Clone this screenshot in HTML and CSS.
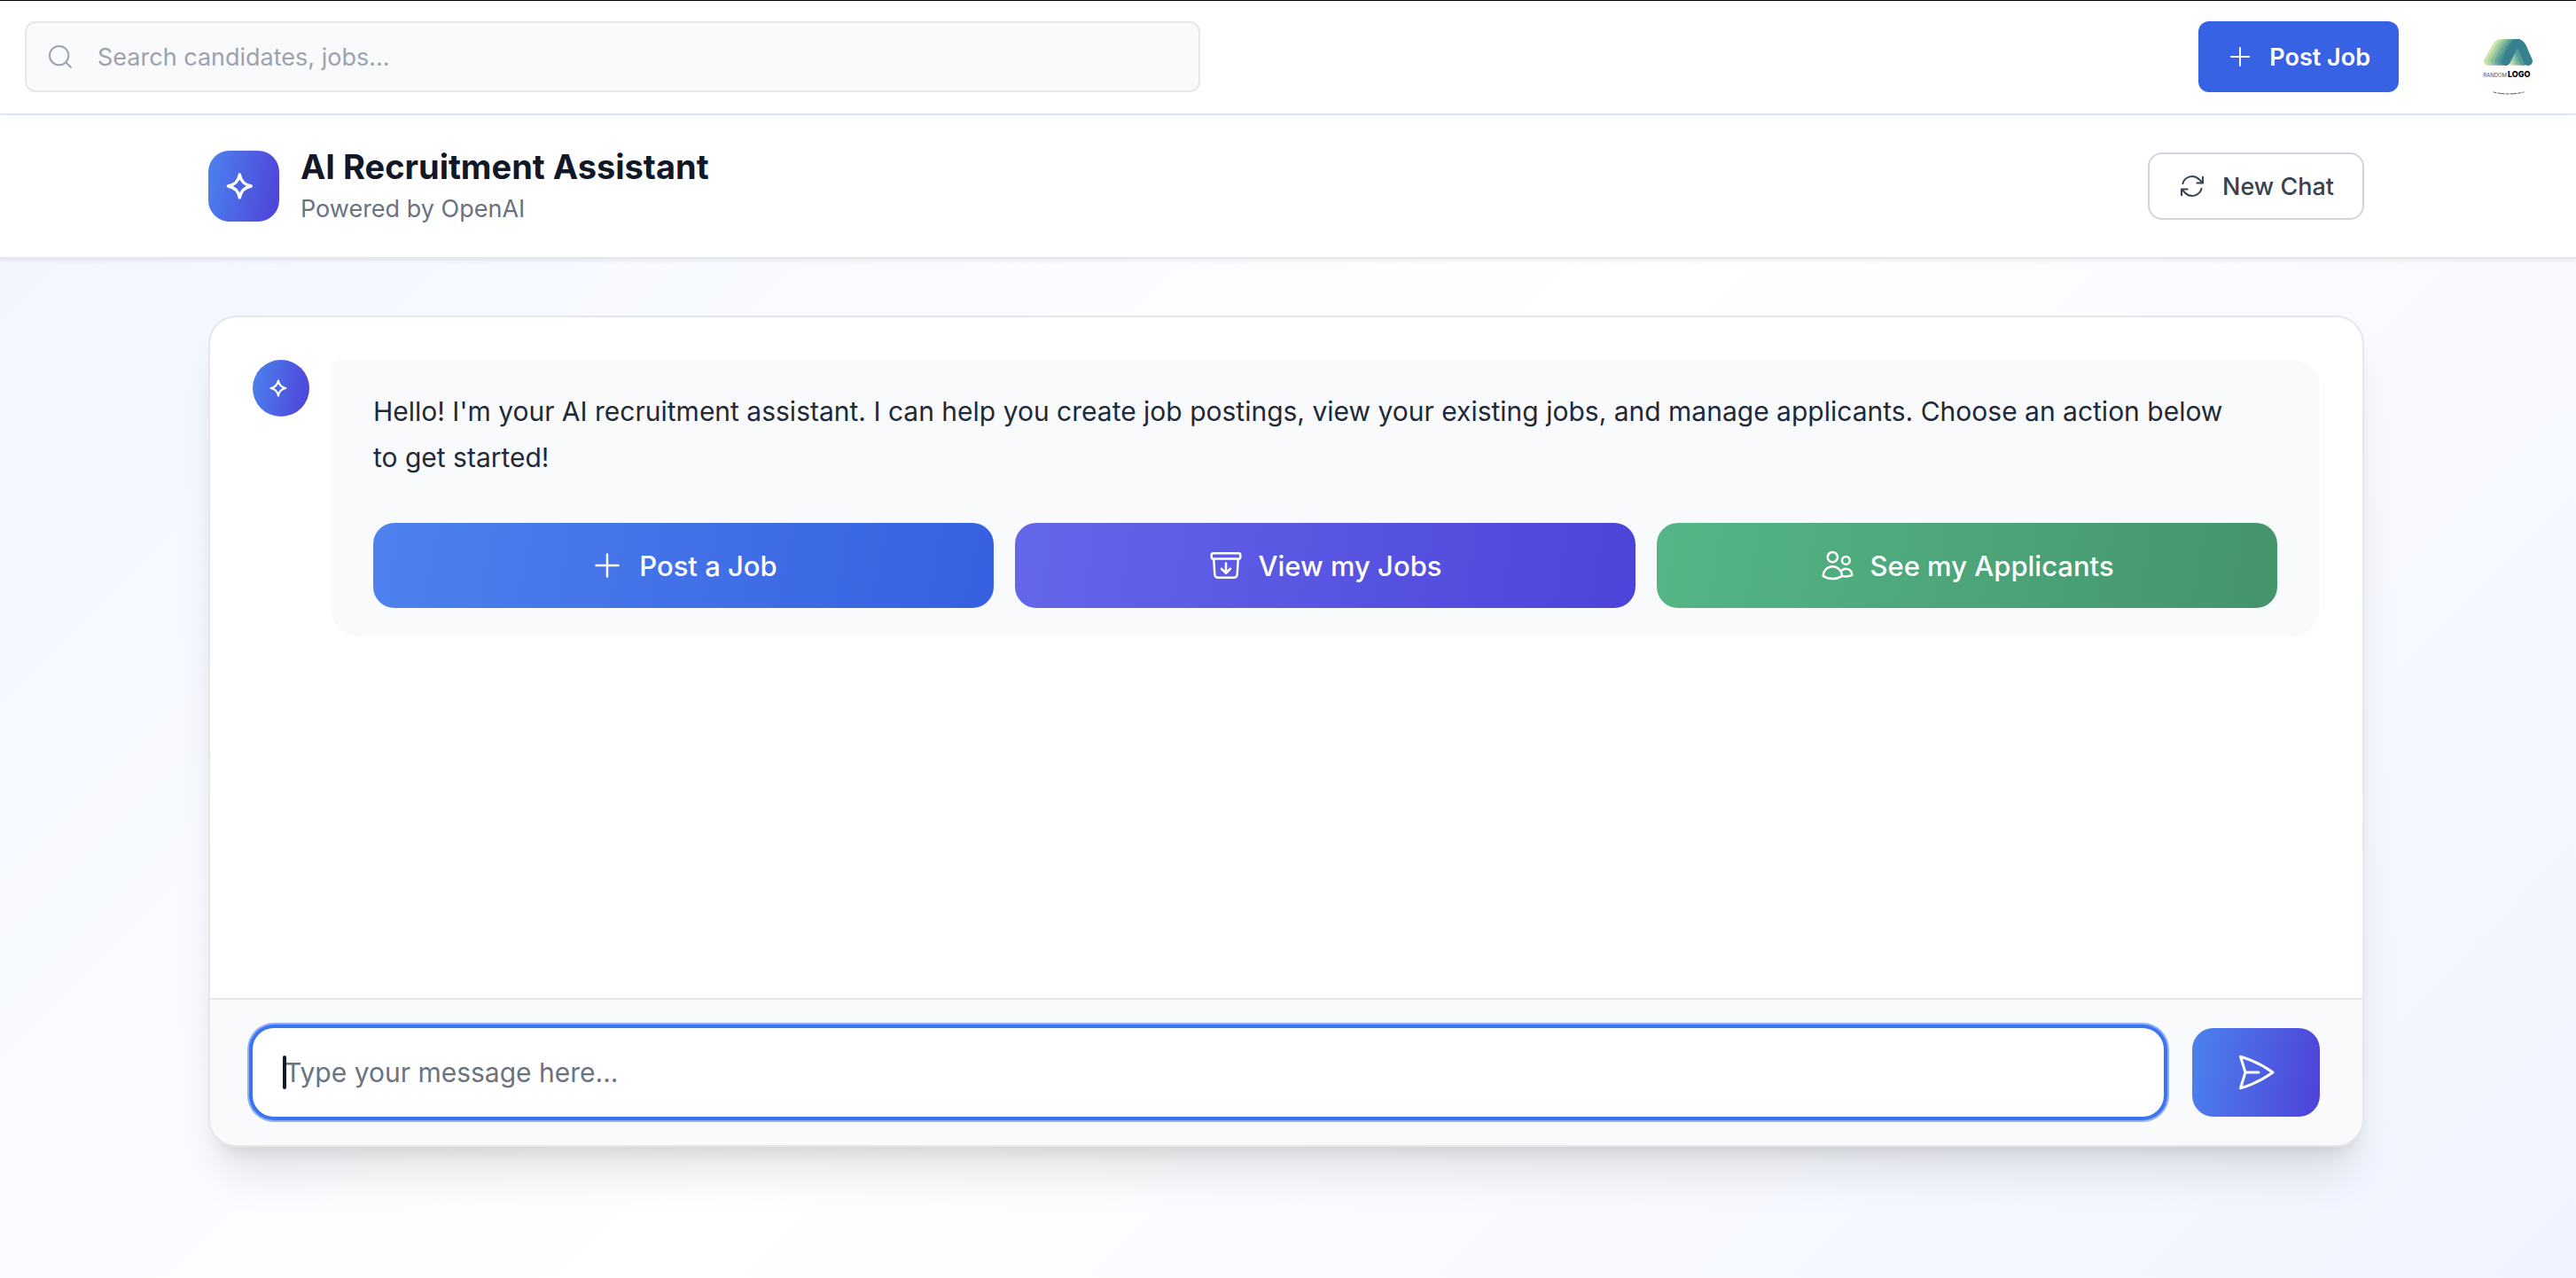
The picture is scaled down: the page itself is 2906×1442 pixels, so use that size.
FILE: index.html
```html
<!DOCTYPE html>
<html lang="en">
<head>
<meta charset="utf-8">
<meta name="viewport" content="width=device-width, initial-scale=1">
<title>AI Recruitment Assistant</title>
<link rel="stylesheet" href="styles.css">
</head>
<body>
<header class="topbar">
  <form class="search" role="search">
    <svg class="search-icon" viewBox="0 0 24 24" aria-hidden="true"><circle cx="11" cy="11" r="8"/><path d="m21 21-4.3-4.3"/></svg>
    <input class="search-input" type="search" aria-label="Search" placeholder="Search candidates, jobs...">
  </form>
  <div class="topbar-actions">
    <button class="post-job" type="button">
      <svg class="icon-sm" viewBox="0 0 24 24" aria-hidden="true"><path d="M4 12h16M12 4v16"/></svg>
      Post Job
    </button>
    <a class="profile" href="#" aria-label="Profile">
      <svg class="logo" viewBox="0 0 64 80" aria-hidden="true">
        <g stroke-width="10">
          <path stroke="#cfe3a8" d="M9 45 L19 28 Q21 25 24 25 H42"/>
          <path stroke="#abd2a2" d="M13 45 L23 28 Q25 25 28 25 H42"/>
          <path stroke="#88bd9e" d="M17 45 L27 28 Q29 25 32 25 H42"/>
          <path stroke="#66a79a" d="M21 45 L31 28 Q33 25 36 25 H42"/>
          <path stroke="#4b9695" d="M25 45 L35 28 Q37 25 40 25 H42"/>
          <path stroke="#c6dfa8" d="M37 45 L41 36"/>
          <path stroke="#a0cba3" d="M41 45 L42 34"/>
          <path stroke="#78b39d" d="M45 45 L42 34"/>
          <path stroke="#559d97" d="M49 45 L43 32"/>
          <path stroke="#37808f" d="M29 45 L37 29 Q42 21 47 29 L54 45"/>
        </g>
        <text class="logo-light" x="30" y="63">RANDOM</text>
        <text class="logo-bold" x="31" y="63">LOGO</text>
        <path stroke="#555" stroke-width="1" stroke-dasharray="3 2 7 2" d="M15 80q17 4 34 0"/>
      </svg>
    </a>
  </div>
</header>

<section class="assistant-bar">
  <div class="container assistant-row">
    <span class="brand-badge">
      <svg class="spark" viewBox="0 0 24 24" aria-hidden="true"><path d="M11 4.200q1.200 6.600 7.800 7.800q-6.600 1.200-7.800 7.800q-1.200-6.600-7.800-7.800q6.600-1.200 7.800-7.800z"/></svg>
    </span>
    <div class="brand-text">
      <h1 class="title">AI Recruitment Assistant</h1>
      <p class="subtitle">Powered by OpenAI</p>
    </div>
    <button class="new-chat" type="button">
      <svg class="icon-refresh" viewBox="0 0 24 24" aria-hidden="true"><path d="M16.023 9.348h4.992v-.001M2.985 19.644v-4.992m0 0h4.992m-4.993 0 3.181 3.183a8.250 8.250 0 0 0 13.803-3.700M4.031 9.865a8.250 8.250 0 0 1 13.803-3.700l3.181 3.182m0-4.991v4.990"/></svg>
      New Chat
    </button>
  </div>
</section>

<main class="container chat-area">
  <section class="chat-card">
    <div class="messages">
      <article class="message">
        <span class="avatar">
          <svg class="spark" viewBox="0 0 24 24" aria-hidden="true"><path d="M11 4.200q1.200 6.600 7.800 7.800q-6.600 1.200-7.800 7.800q-1.200-6.600-7.800-7.800q6.600-1.200 7.800-7.800z"/></svg>
        </span>
        <div class="bubble">
          <p class="message-text">Hello! I'm your AI recruitment assistant. I can help you create job postings, view your existing jobs, and manage applicants. Choose an action below to&nbsp;get started!</p>
          <div class="actions">
            <button class="action action-blue" type="button">
              <svg class="icon-action" viewBox="0 0 24 24" aria-hidden="true"><path d="M12 4.500v15m7.500-7.500h-15"/></svg>
              Post a Job
            </button>
            <button class="action action-indigo" type="button">
              <svg class="icon-action" viewBox="0 0 24 24" aria-hidden="true"><path d="m20.250 7.500-.625 10.632a2.250 2.250 0 0 1-2.247 2.118H6.622a2.250 2.250 0 0 1-2.247-2.118L3.750 7.500m8.250 3v6.750m0 0-3-3m3 3 3-3M3.375 7.500h17.250c.621 0 1.125-.504 1.125-1.125v-1.500c0-.621-.504-1.125-1.125-1.125H3.375c-.621 0-1.125.504-1.125 1.125v1.500c0 .621.504 1.125 1.125 1.125Z"/></svg>
              View my Jobs
            </button>
            <button class="action action-green" type="button">
              <svg class="icon-action" viewBox="0 0 24 24" aria-hidden="true"><path d="M15 19.128a9.380 9.380 0 0 0 2.625.372 9.337 9.337 0 0 0 4.121-.952 4.125 4.125 0 0 0-7.533-2.493M15 19.128v-.003c0-1.113-.285-2.160-.786-3.070M15 19.128v.106A12.318 12.318 0 0 1 8.624 21c-2.331 0-4.512-.645-6.374-1.766l-.001-.109a6.375 6.375 0 0 1 11.964-3.070M12 6.375a3.375 3.375 0 1 1-6.750 0 3.375 3.375 0 0 1 6.750 0Zm8.250 2.250a2.625 2.625 0 1 1-5.250 0 2.625 2.625 0 0 1 5.250 0Z"/></svg>
              See my Applicants
            </button>
          </div>
        </div>
      </article>
    </div>
    <form class="composer">
      <div class="field">
        <input class="field-input" type="text" aria-label="Message" placeholder="Type your message here...">
        <span class="caret"></span>
      </div>
      <button class="send" type="button" aria-label="Send">
        <svg class="icon-send" viewBox="0 0 24 24" aria-hidden="true"><path d="M6 12 3.269 3.125A59.769 59.769 0 0 1 21.485 12 59.768 59.768 0 0 1 3.270 20.875L5.999 12Zm0 0h7.500"/></svg>
      </button>
    </form>
  </section>
</main>
</body>
</html>
```
FILE: styles.css
```css
* {
  box-sizing: border-box;
}

body {
  margin: 0;
  min-height: 100vh;
  display: flex;
  flex-direction: column;
  font-family: Inter, "Liberation Sans", sans-serif;
  color: #111827;
  background: linear-gradient(135deg, #f0f5ff, #fff 50%, #f0f4ff);
}

button,
input {
  font: inherit;
}

button {
  border: 0;
  display: inline-flex;
  align-items: center;
  justify-content: center;
  cursor: pointer;
}

svg {
  display: block;
  flex: none;
  fill: none;
  stroke: currentColor;
  stroke-linecap: round;
  stroke-linejoin: round;
  stroke-width: 1.5;
}

.container {
  width: 100%;
  max-width: 2560px;
  margin: 0 auto;
  padding: 0 66px 0 62px;
}

/* Top bar */
.topbar {
  display: flex;
  align-items: center;
  justify-content: space-between;
  padding: 23px 32px 24px 28px;
  border-top: 1px solid #000;
  border-bottom: 2px solid #e2e8f0;
  background: #fff;
}

.search {
  display: flex;
  flex: 0 1 1326px;
  align-items: center;
  gap: 26px;
  height: 80px;
  padding: 0 22px;
  border: 2px solid #e5e7eb;
  border-radius: 12px;
  background: #f9fafc;
}

.search-icon {
  width: 32px;
  height: 32px;
  color: #9ca3af;
}

.search-input {
  flex: 1;
  border: 0;
  padding: 0;
  outline: 0;
  background: transparent;
  font-size: 27px;
}

.search-input::placeholder {
  color: #9ca3af;
}

.topbar-actions {
  display: flex;
  align-items: center;
  gap: 92px;
}

.post-job {
  height: 80px;
  padding: 0 32px;
  gap: 18px;
  border-radius: 12px;
  background: #3762e3;
  color: #fff;
  font-size: 27px;
  font-weight: 600;
}

.icon-sm {
  width: 30px;
  height: 30px;
}

.profile {
  display: block;
  margin-right: 12px;
}

.logo {
  width: 64px;
  height: 80px;
  overflow: visible;
}

.logo text {
  stroke: none;
}

.logo-light {
  fill: #555;
  font-family: "Liberation Sans Narrow", Inter, sans-serif;
  font-size: 6px;
  text-anchor: end;
}

.logo-bold {
  fill: #000;
  font-family: Inter, sans-serif;
  font-size: 9px;
  font-weight: 800;
}

/* Assistant header */
.assistant-bar {
  padding: 34px 0;
  border-bottom: 2px solid #e5e7eb;
  background: #fff;
  box-shadow: 0 2px 6px rgba(0, 0, 0, 0.08);
}

.assistant-row {
  display: flex;
  align-items: center;
  gap: 24px;
}

.brand-badge,
.avatar,
.send {
  color: #fff;
  background: linear-gradient(100deg, #4c83ee, #4f41d9);
}

.brand-badge {
  display: flex;
  flex: none;
  width: 80px;
  height: 80px;
  padding: 20px 17px;
  border-radius: 24px;
}

.spark {
  stroke-width: 2;
}

.brand-badge .spark {
  width: 40px;
  height: 40px;
}

.brand-text {
  display: flex;
  flex: 1;
  flex-direction: column;
  gap: 4px;
}

.title {
  margin: 0;
  font-size: 38px;
  line-height: 48px;
  font-weight: 700;
}

.subtitle {
  margin: 0;
  font-size: 27px;
  line-height: 40px;
  color: #6b7280;
}

.new-chat {
  height: 76px;
  padding: 0 32px;
  gap: 18px;
  border: 2px solid #d1d5db;
  border-radius: 16px;
  background: #fff;
  color: #374151;
  font-size: 27px;
  font-weight: 500;
}

.icon-refresh {
  width: 32px;
  height: 32px;
}

/* Chat */
.chat-area {
  flex: 1;
  display: flex;
  padding-top: 64px;
  padding-bottom: 148px;
}

.chat-card {
  flex: 1;
  display: flex;
  flex-direction: column;
  border: 2px solid #e5e7eb;
  border-radius: 32px;
  background: #fff;
  box-shadow: 0 40px 50px -10px rgba(0, 0, 0, 0.1), 0 16px 20px -12px rgba(0, 0, 0, 0.1);
  overflow: hidden;
}

.messages {
  flex: 1;
  padding: 48px;
}

.message {
  display: flex;
  align-items: flex-start;
  gap: 24px;
}

.avatar {
  display: flex;
  flex: none;
  width: 64px;
  height: 64px;
  padding: 19px 17px;
  border-radius: 50%;
}

.avatar .spark {
  width: 26px;
  height: 26px;
}

.bubble {
  flex: 1;
  padding: 32px 48px;
  border-radius: 12px 32px 32px 32px;
  background: #f9fafc;
}

.message-text {
  margin: 0 0 48px;
  font-size: 30px;
  line-height: 52px;
  color: #1f2937;
}

.actions {
  display: grid;
  grid-template-columns: repeat(3, 1fr);
  gap: 24px;
}

.action {
  height: 96px;
  gap: 16px;
  border-radius: 24px;
  color: #fff;
  font-size: 31px;
  font-weight: 500;
}

.action-blue {
  background: linear-gradient(100deg, #4e82ee, #3660e1);
}

.action-indigo {
  background: linear-gradient(100deg, #6567ea, #4c44da);
}

.action-green {
  background: linear-gradient(100deg, #54b686, #44946c);
}

.icon-action {
  width: 40px;
  height: 40px;
}

.composer {
  display: flex;
  gap: 32px;
  padding: 32px 48px;
  border-top: 2px solid #e5e7eb;
  background: #f9fafc;
}

.field {
  position: relative;
  flex: 1;
}

.field-input {
  display: block;
  width: 100%;
  height: 100px;
  padding: 0 36px;
  border: 0;
  outline: 0;
  border-radius: 24px;
  background: #fff;
  box-shadow: 0 0 0 4px #3b74ee, 0 0 0 6px #93aef2;
  font-size: 30px;
}

.field-input::placeholder {
  color: #6b7280;
}

.caret {
  position: absolute;
  left: 34px;
  top: 31px;
  width: 4px;
  height: 38px;
  border-radius: 2px;
  background: #111827;
}

.send {
  width: 144px;
  height: 100px;
  border-radius: 24px;
}

.icon-send {
  width: 48px;
  height: 48px;
}
```
